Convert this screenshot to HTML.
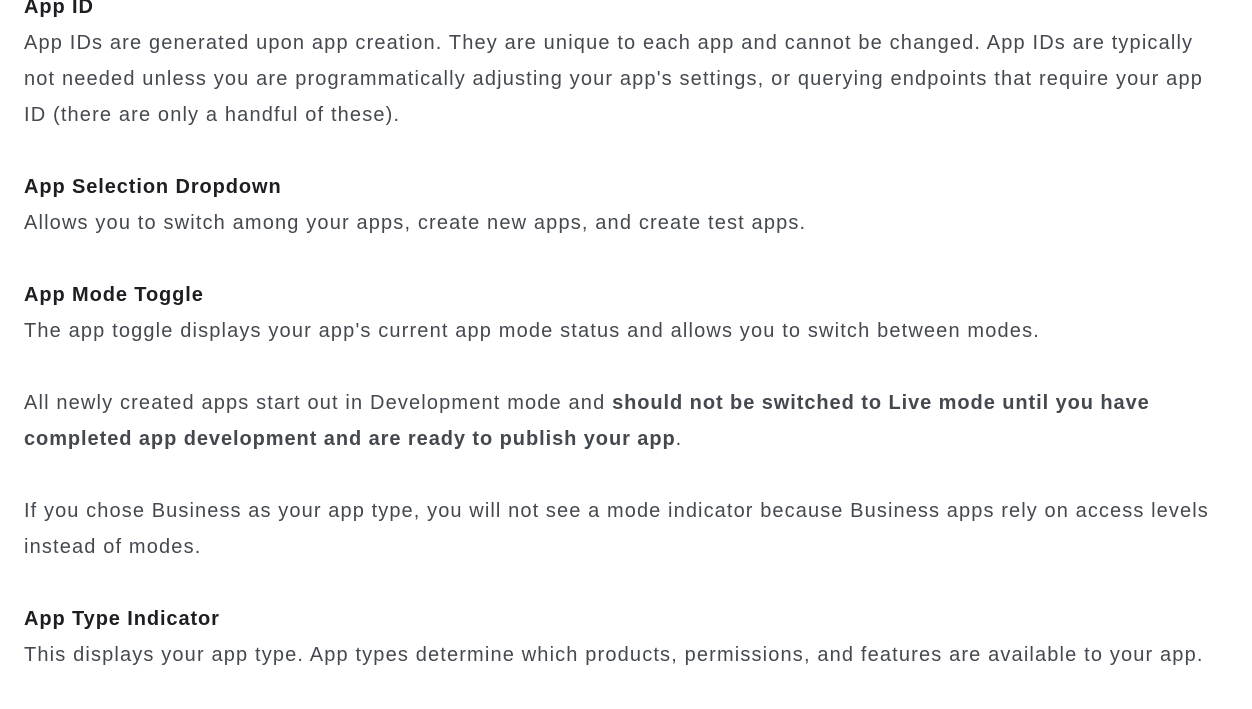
<!DOCTYPE html>
<html><head><meta charset="utf-8"><style>
html,body{margin:0;padding:0;background:#fff;width:1252px;height:705px;overflow:hidden}
.c{position:absolute;left:24px;top:-11px;font-family:"Liberation Sans",sans-serif;font-size:20px;line-height:36px;color:#444950;white-space:nowrap;letter-spacing:1.15px}
p{margin:0 0 36px 0}
h{display:block;font-weight:bold;color:#1c1e21;letter-spacing:0.9px}
b{color:#444950;letter-spacing:0.93px}
</style></head><body><div class="c">
<p><h>App ID</h>App IDs are generated upon app creation. They are unique to each app and cannot be changed. App IDs are typically<br>not needed unless you are programmatically adjusting your app's settings, or querying endpoints that require your app<br>ID (there are only a handful of these).</p>
<p><h>App Selection Dropdown</h>Allows you to switch among your apps, create new apps, and create test apps.</p>
<p><h>App Mode Toggle</h>The app toggle displays your app's current app mode status and allows you to switch between modes.</p>
<p>All newly created apps start out in Development mode and <b>should not be switched to Live mode until you have<br>completed app development and are ready to publish your app</b>.</p>
<p><span style="letter-spacing:1.1px">If you chose Business as your app type, you will not see a mode indicator because Business apps rely on access levels</span><br>instead of modes.</p>
<p><h>App Type Indicator</h>This displays your app type. App types determine which products, permissions, and features are available to your app.</p>
</div></body></html>
